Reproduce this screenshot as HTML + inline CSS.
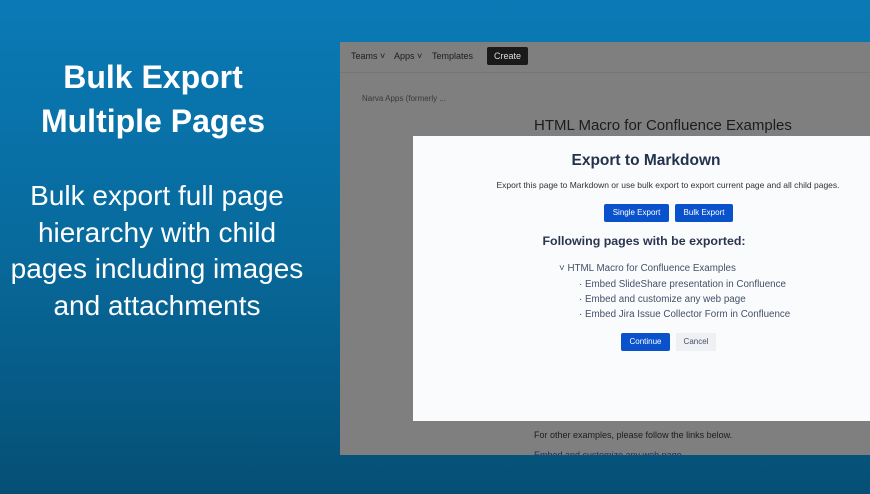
<!DOCTYPE html>
<html><head><style>
*{margin:0;padding:0;box-sizing:border-box}
body{width:870px;height:494px;overflow:hidden;position:relative;font-family:"Liberation Sans",sans-serif;background:linear-gradient(180deg,#0a7ab6 0%,#086a9c 50%,#054f75 100%)}
.l{position:absolute;color:#fff;text-align:center}
.shot{position:absolute;left:340px;top:42px;width:530px;height:413px;background:#7f7f7f;overflow:hidden}
.nav{height:31px;border-bottom:1px solid #767676;font-size:9px;color:#1c1c1c;position:relative}
.nav span{position:absolute;top:9px}
.modal{position:absolute;left:73px;top:94px;width:457px;height:285px;background:#fafbfc;text-align:center;color:#24324e}
.btn{position:absolute;background:#0a52cc;color:#fff;font-size:8px;border-radius:2px;text-align:center;line-height:18px}
.li{position:absolute;font-size:9.8px;color:#44506a;white-space:nowrap}
.c{position:absolute;white-space:nowrap;transform:translateX(-50%)}
</style></head><body>
<div class="l" style="left:0;width:306px;top:55px;font-size:32px;font-weight:bold;line-height:44px">Bulk Export<br>Multiple Pages</div>
<div class="l" style="left:0;width:314px;top:178px;font-size:28px;line-height:36.5px">Bulk export full page<br>hierarchy with child<br>pages including images<br>and attachments</div>
<div class="shot">
 <div class="nav"><span style="left:11px">Teams ˅</span><span style="left:54px">Apps ˅</span><span style="left:92px">Templates</span>
 <span style="left:147px;top:5px;background:#1a1a1a;color:#ddd;padding:4px 7px;border-radius:2px">Create</span></div>
 <div style="position:absolute;left:22px;top:52px;font-size:8px;color:#3a3a3a">Narva Apps (formerly ...</div>
 <div style="position:absolute;left:194px;top:75px;font-size:15px;color:#1c1c1c">HTML Macro for Confluence Examples</div>
 <div style="position:absolute;left:194px;top:388px;font-size:9px;color:#1c1c1c">For other examples, please follow the links below.</div>
 <div style="position:absolute;left:194px;top:408px;font-size:9px;color:#1c2a5c">Embed and customize any web page</div>
 <div class="modal">
  <div class="c" style="left:233px;top:16px;font-size:15.5px;font-weight:bold">Export to Markdown</div>
  <div class="c" style="left:255px;top:44px;font-size:8.5px;color:#333">Export this page to Markdown or use bulk export to export current page and all child pages.</div>
  <div class="btn" style="left:191px;top:68px;width:65px">Single Export</div>
  <div class="btn" style="left:262px;top:68px;width:58px">Bulk Export</div>
  <div class="c" style="left:231px;top:98px;font-size:12.4px;font-weight:bold;color:#2a3550">Following pages with be exported:</div>
  <div class="li" style="left:146px;top:127px">˅ HTML Macro for Confluence Examples</div>
  <div class="li" style="left:166px;top:143px">· Embed SlideShare presentation in Confluence</div>
  <div class="li" style="left:166px;top:158px">· Embed and customize any web page</div>
  <div class="li" style="left:166px;top:173px">· Embed Jira Issue Collector Form in Confluence</div>
  <div class="btn" style="left:208px;top:197px;width:49px">Continue</div>
  <div class="btn" style="left:263px;top:197px;width:40px;background:#eef0f3;color:#44506a">Cancel</div>
 </div>
</div>
</body></html>
